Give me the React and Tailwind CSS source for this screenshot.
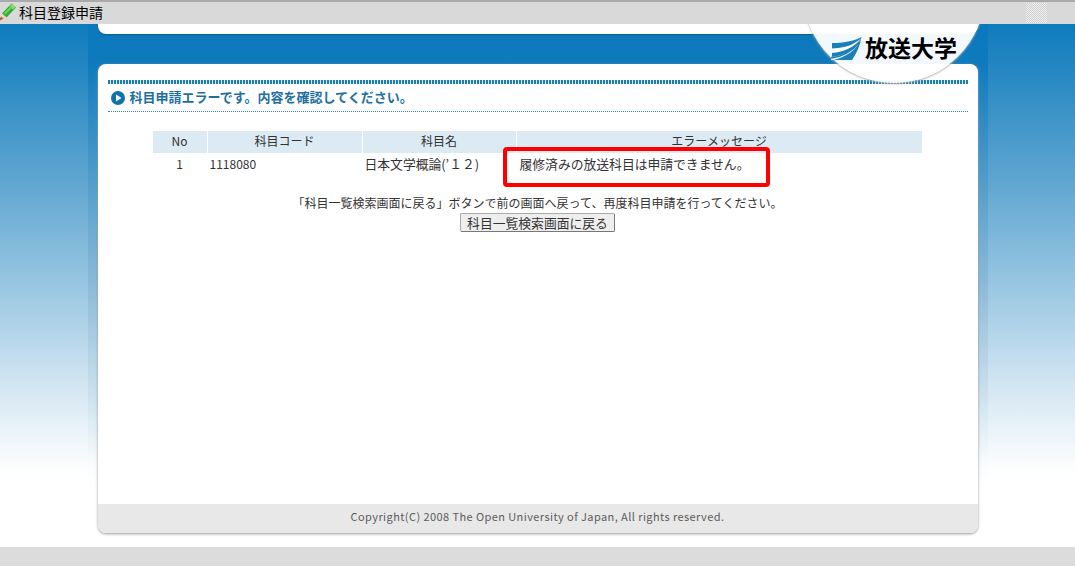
import React from 'react';

function PencilIcon() {
    return (
        <svg width="16" height="18" viewBox="0 0 16 18" className="shrink-0">
            <path d="M11.5 0.5 L16 4.5 L6.5 14.5 L2 10.5 Z" fill="#35ad35" />
            <path d="M12 1 L15.5 4 L13 6.5 L9.5 3.5 Z" fill="#8ee06c" />
            <path d="M4 10 L11 3 L12.5 4.5 L5.5 11.5 Z" fill="#6ed05a" />
            <path d="M2 10.5 L6.5 14.5 L0 17.5 Z" fill="#ecd7b6" />
            <path d="M0 15 L1.5 13.5 L3.5 15.8 L0 17.5 Z" fill="#a8684a" />
        </svg>
    );
}

function LogoMark() {
    return (
        <svg width="31" height="24" viewBox="0 0 31 24" className="shrink-0">
            <path d="M1 6 C12 6 23 4 30.5 0 C29 8 26 16 21 23 L0 23 L1 18 Z" fill="#1b7fb8" />
            <path d="M0.5 11.5 C12 11.5 23 8 30.5 1 C24 10 13 15 0.5 16 Z" fill="#ffffff" />
            <path d="M0 20 C12 19 23 13 30 3 C25 13 15 20 3 23 L0 23 Z" fill="#ffffff" fillOpacity="0.85" />
            <path d="M0 21 C10 20 20 15 29 5" stroke="#1b7fb8" strokeWidth="1.6" fill="none" />
        </svg>
    );
}

const rows = [{ no: '1', code: '1118080', name: '日本文学概論(’１２)', message: '履修済みの放送科目は申請できません。' }];

export default function App() {
    return (
        <div className="h-[574px] w-[1075px] flex flex-col overflow-hidden bg-white font-['Noto_Sans_CJK_JP',sans-serif] text-[#333]">
            <div className="h-6 shrink-0 bg-[#d9d9d9] border-t-2 border-[#aaaaaa] flex items-center justify-between">
                <div className="flex items-center gap-[3px] text-[14px] text-black -mt-[2px]">
                    <PencilIcon />
                    <span>科目登録申請</span>
                </div>
                <div className="w-[21px] h-5 mr-[28px] bg-[repeating-conic-gradient(#cfcfcf_0_25%,#efefef_0_50%)] bg-[length:2px_2px]"></div>
            </div>

            <div className="relative flex-1 overflow-hidden bg-[linear-gradient(180deg,#0f7bbd_0%,#5ca4d0_29%,#9cc8e3_51%,#d5e7f3_70%,#ffffff_86%)]">
                <div className="mx-auto w-[900px] h-full px-[10px] bg-[linear-gradient(180deg,#0a78bc_0%,#0f7bbd_8%,#4f9bc9_29%,#8fbcd9_51%,#c9dfec_70%,#f8fbfc_84%,#ffffff_88%)]">
                    <div className="h-[10px] bg-white rounded-b-[8px] shadow-[0_1px_1px_#0a5f92]"></div>

                    <div className="mt-[30px] h-[469px] bg-white rounded-[8px] flex flex-col shadow-[0_1px_3px_#9a9a9a] overflow-hidden">
                        <div className="flex-1 pt-4 px-[10px]">
                            <div className="h-1 bg-[repeating-linear-gradient(90deg,#1f7fa8_0_2px,#d5e8f0_2px_3px)]"></div>
                            <div className="h-7 flex items-center pl-[3px] pb-[1px] gap-[5px] border-b border-dotted border-[#2a83ad]">
                                <svg width="14" height="14" viewBox="0 0 14 14" className="mt-[2px]">
                                    <circle cx="7" cy="7" r="7" fill="#0f74ae" />
                                    <path d="M5 3.6 L10.5 7 L5 10.4 Z" fill="#ffffff" />
                                </svg>
                                <h1 className="text-[13px] font-bold text-[#1e6f9f]">科目申請エラーです。内容を確認してください。</h1>
                            </div>

                            <div className="relative mt-[19px] mx-[45px] w-[769px] text-[12px]">
                                <div className="grid grid-cols-[54px_154px_153px_405px] gap-x-[1px] h-[22px] text-center leading-[19px]">
                                    <div className="bg-[#dceaf3]">No</div>
                                    <div className="bg-[#dceaf3]">科目コード</div>
                                    <div className="bg-[#dceaf3]">科目名</div>
                                    <div className="bg-[#dceaf3]">エラーメッセージ</div>
                                </div>
                                {rows.map((row) => (
                                    <div key={row.no} className="grid grid-cols-[54px_154px_153px_405px] gap-x-[1px] h-[22px] leading-[22px]">
                                        <div className="text-center">{row.no}</div>
                                        <div className="pl-[2px]">{row.code}</div>
                                        <div className="pl-[2px] text-[12.8px] whitespace-nowrap">{row.name}</div>
                                        <div className="pl-[3px] text-[12.8px]">{row.message}</div>
                                    </div>
                                ))}
                                <div className="absolute left-[350px] top-4 w-[267px] h-10 border-4 border-[#ff0000] rounded-[4px]"></div>
                            </div>

                            <div className="mt-[18px] flex flex-col items-center text-[12px]">
                                <p className="leading-[20px]">「科目一覧検索画面に戻る」ボタンで前の画面へ戻って、再度科目申請を行ってください。</p>
                                <button className="w-[155px] h-[19px] bg-[#eeeeee] border border-[#aaa] border-r-[#777] border-b-[#777] rounded-[2px] text-[12.8px] leading-[16px] text-[#333]">
                                    科目一覧検索画面に戻る
                                </button>
                            </div>
                        </div>

                        <div className="h-[29px] pb-1 bg-[#e8e8e8] flex items-center justify-center text-[11px] text-[#5c5c5c] tracking-[0.42px]">
                            Copyright(C) 2008 The Open University of Japan, All rights reserved.
                        </div>
                    </div>
                </div>

                <div className="absolute right-[90px] -top-[123px] w-[182px] h-[182px] rounded-full bg-white/95 shadow-[0_1px_2px_#aaaaaa] flex items-end justify-center pb-[22px] gap-[3px]">
                    <LogoMark />
                    <span className="text-[23px] leading-[28px] font-bold text-black">放送大学</span>
                </div>
            </div>

            <div className="h-[19px] shrink-0 bg-[#dcdcdc]"></div>
            <div className="h-2 shrink-0 bg-white"></div>
        </div>
    );
}
